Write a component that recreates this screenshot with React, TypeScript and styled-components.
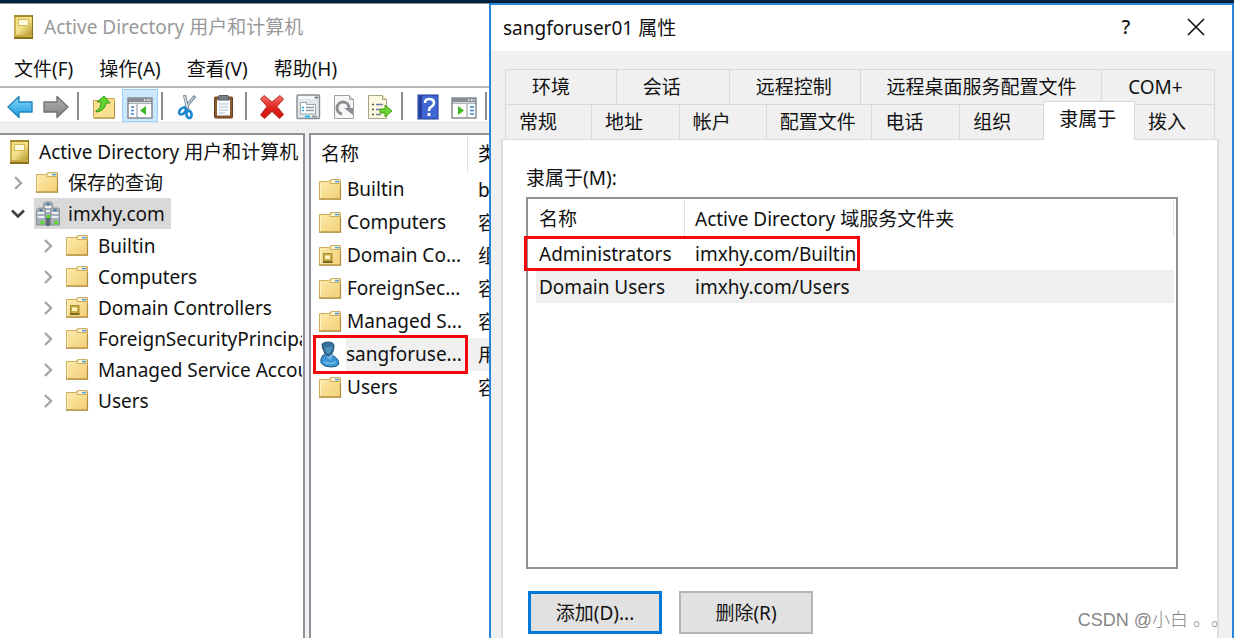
import React from "react";
import styled, { createGlobalStyle } from "styled-components";

const GlobalStyle = createGlobalStyle`
  *, *::before, *::after { box-sizing: border-box; }
  body {
    margin: 0;
    background: #fff;
    color: #111;
    font: 19px/24px "Noto Sans", "Noto Sans CJK SC", sans-serif;
  }
  button, input { font: inherit; color: inherit; }
  ul { list-style: none; margin: 0; padding: 0; }
  svg { display: block; flex: none; }
`;

const Desktop = styled.main`
  position: relative;
  display: flex;
  min-height: 100vh;
  padding-top: 3px;
  background: #03203c;
  overflow: hidden;
`;

const Console = styled.section`
  flex: 0 0 489px;
  display: flex;
  flex-direction: column;
  background: #f0f0f0;
  border-top: 1px solid #8b9197;
  overflow: hidden;
`;

const ConsoleTitle = styled.header`
  display: flex;
  align-items: center;
  gap: 10px;
  height: 46px;
  padding-left: 13px;
  background: #fff;
  color: #999;
  white-space: nowrap;
`;

const Heading = styled.h1`
  margin: 0;
  font: inherit;
`;

const MenuBar = styled.nav`
  display: flex;
  gap: 26px;
  height: 38px;
  padding: 2px 14px 0;
  background: #fff;
  border-bottom: 2px solid #b9b9b9;
`;

const MenuButton = styled.button`
  padding: 0;
  border: 0;
  background: none;
  white-space: nowrap;
`;

const ToolBar = styled.div`
  display: flex;
  align-items: center;
  height: 35px;
  padding: 1px 0 0 2px;
  background: #fff;
  border-bottom: 1px solid #e3e3e3;
`;

const ToolButton = styled.button<{ $on?: boolean }>`
  display: flex;
  flex: none;
  align-items: center;
  justify-content: center;
  width: 36px;
  height: 33px;
  padding: 2px 0 0;
  border: 1px solid ${(p) => (p.$on ? "#99d1ff" : "transparent")};
  background: ${(p) => (p.$on ? "#cce8ff" : "none")};
`;

const ToolDivider = styled.span`
  flex: none;
  width: 2px;
  height: 28px;
  margin: 0 7px 0 3px;
  background: #8d8d8d;
`;

const Panes = styled.div`
  flex: 1;
  display: flex;
  gap: 4px;
  padding-top: 10px;
`;

const TreePane = styled.nav`
  flex: 0 0 305px;
  min-width: 0;
  padding: 1px 1px 0 0;
  background: #fff;
  border: solid #8d9299;
  border-width: 2px 2px 0 0;
`;

const TreeClip = styled.div`
  overflow: hidden;
`;

const TreeRow = styled.div<{ $level: number }>`
  display: flex;
  align-items: center;
  height: 31px;
  padding-left: ${(p) => [8, 0, 30][p.$level]}px;
  white-space: nowrap;
`;

const Branch = styled.ul`
  padding-top: 1px;
`;

const Twisty = styled.button`
  display: flex;
  flex: none;
  align-items: center;
  justify-content: center;
  width: 34px;
  height: 31px;
  padding: 0;
  border: 0;
  background: none;
`;

const TreeLabel = styled.a<{ $selected?: boolean; $gap?: number }>`
  display: flex;
  align-items: center;
  gap: ${(p) => p.$gap ?? 9}px;
  height: 31px;
  padding: 0 6px 0 1px;
  background: ${(p) => (p.$selected ? "#d9d9d9" : "none")};
  color: inherit;
  text-decoration: none;
`;

const ListPane = styled.div`
  flex: 1;
  min-width: 0;
  background: #fff;
  border: solid #8d9299;
  border-width: 2px 0 0 2px;
  overflow: hidden;
`;

const ObjectTable = styled.table`
  width: 260px;
  table-layout: fixed;
  border-collapse: collapse;
  th, td {
    height: 33px;
    padding: 0 0 0 10px;
    text-align: left;
    font-weight: 400;
    white-space: nowrap;
  }
  th { height: 38px; }
  th:first-child { width: 157px; box-shadow: inset -1px 0 #e2e2e2; }
  td:first-child { padding-left: 7px; }
`;

const ObjectName = styled.span`
  position: relative;
  display: flex;
  align-items: center;
  gap: 5px;
  height: 33px;
`;

const NameText = styled.span<{ $shaded?: boolean }>`
  flex: 1;
  line-height: 33px;
  background: ${(p) => (p.$shaded ? "#f0f0f0" : "none")};
`;

const TypeCell = styled.td<{ $shaded?: boolean }>`
  background: ${(p) => (p.$shaded ? "#f0f0f0" : "none")};
`;

const ObjectMark = styled.span`
  position: absolute;
  inset: -3px 0 -3px -5px;
  border: 3px solid #f5060b;
`;

const Dialog = styled.section`
  flex: 1;
  min-width: 0;
  display: flex;
  flex-direction: column;
  background: #f0f0f0;
  border: solid #2b86d9;
  border-width: 2px 2px 0;
`;

const DialogTitle = styled.header`
  display: flex;
  align-items: center;
  height: 46px;
  padding: 0 23px 0 12px;
  background: #fff;
`;

const DialogHeading = styled.h2`
  flex: 1;
  margin: 0;
  font: inherit;
`;

const CaptionButton = styled.button`
  display: flex;
  align-items: center;
  justify-content: center;
  width: 26px;
  height: 30px;
  margin-left: 44px;
  padding: 0 0 2px;
  border: 0;
  background: none;
  font-weight: 500;
`;

const TabRows = styled.div`
  padding: 18px 17px 0 14px;
`;

const TabRow = styled.div<{ $columns: string }>`
  display: grid;
  grid-template-columns: ${(p) => p.$columns};
  height: 35px;
  border-left: 1px solid #d9d9d9;
`;

const Tab = styled.button<{ $indent: number; $active?: boolean }>`
  position: relative;
  padding: 0 0 ${(p) => (p.$active ? 4 : 0)}px ${(p) => p.$indent}px;
  border: solid #d9d9d9;
  border-width: 1px 1px 0 ${(p) => (p.$active ? 1 : 0)}px;
  background: ${(p) => (p.$active ? "#fff" : "none")};
  margin: ${(p) => (p.$active ? "-3px 0 -1px -1px" : "0")};
  text-align: left;
  white-space: nowrap;
`;

const TabPanel = styled.div`
  flex: 1;
  display: flex;
  flex-direction: column;
  margin: 0 13px 0 10px;
  padding: 26px 39px 4px 23px;
  background: #fff;
  border: solid #dcdcdc;
  border-width: 1px 2px 0;
`;

const PanelLabel = styled.h3`
  margin: 0 0 7px;
  font: inherit;
`;

const MemberFrame = styled.div`
  flex: 1;
  min-height: 160px;
  padding: 1px 2px 0 8px;
  border: 2px solid #8d9299;
`;

const MemberTable = styled.table`
  width: 100%;
  table-layout: fixed;
  border-collapse: collapse;
  th, td {
    height: 33px;
    padding: 0 0 0 10px;
    text-align: left;
    font-weight: 400;
    white-space: nowrap;
  }
  th { height: 37px; box-shadow: inset -1px 0 #e2e2e2; }
  th:first-child { width: 149px; }
  th:first-child, td:first-child { padding-left: 3px; }
`;

const MemberRow = styled.tr<{ $shaded?: boolean }>`
  position: relative;
  background: ${(p) => (p.$shaded ? "#efefef" : "none")};
`;

const MemberMark = styled.span`
  position: absolute;
  z-index: 1;
  left: -12px;
  top: -1px;
  width: 336px;
  height: 35px;
  border: 3px solid #f5060b;
`;

const Actions = styled.div`
  display: flex;
  gap: 17px;
  margin-top: 22px;
  padding-left: 2px;
`;

const ActionButton = styled.button<{ $primary?: boolean }>`
  width: 134px;
  height: 43px;
  padding: 0;
  border: ${(p) => (p.$primary ? "3px solid #0078d7" : "2px solid #b5b5b5")};
  background: #e1e1e1;
`;

const Watermark = styled.div`
  position: absolute;
  right: 5px;
  bottom: 6px;
  color: #868686;
  font: 18px/24px "Liberation Sans", "Noto Sans CJK SC", sans-serif;
  font-weight: 300;
  text-spacing-trim: space-all;
  white-space: nowrap;
`;

function BookIcon() {
  return (
    <svg width="21" height="26" viewBox="0 0 21 26" aria-hidden="true">
      <defs>
        <linearGradient id="book" x1="0" x2="1" y1="0" y2="1">
          <stop offset="0" stopColor="#efdc7c" />
          <stop offset="0.5" stopColor="#f3e28a" />
          <stop offset="1" stopColor="#b9962c" />
        </linearGradient>
      </defs>
      <rect x="1" y="1" width="19" height="24" fill="#8a6f1c" />
      <rect x="1" y="3" width="18" height="18" fill="url(#book)" />
      <path d="M1 1h18v2H1z" fill="#a98a2c" />
      <path d="M1 21h18v2H1z" fill="#c9ac48" />
      <path d="M1 3h2v18H1z" fill="#cdb14e" />
      <rect x="5.500" y="5.500" width="10" height="6" fill="#fffbe2" stroke="#d4bb58" />
    </svg>
  );
}

function FolderIcon({ badge }: { badge?: boolean }) {
  return (
    <svg width="24" height="24" viewBox="0 0 24 24" aria-hidden="true">
      <defs>
        <linearGradient id="folder" x1="0" x2="1" y1="0" y2="1">
          <stop offset="0" stopColor="#fdebae" />
          <stop offset="1" stopColor="#f2cf75" />
        </linearGradient>
      </defs>
      <path d="M1.500 3.500h9l2-1.500h10v19h-21z" fill="url(#folder)" stroke="#d1ad5c" />
      <path d="M11.500 5l2-3.500h8.500v4h-10z" fill="#fff4cc" stroke="#c19c4b" strokeWidth="0.800" />
      <path d="M17 2.800h4v1.600h-4z" fill="#4c9fd8" />
      <path d="M2.500 5v15" stroke="#fff3c4" />
      <path d="M1 21.200h21.500V7" fill="none" stroke="#b28d42" strokeWidth="1.200" />
      {badge && (
        <g>
          <rect x="5.500" y="9.500" width="8.500" height="9" fill="#c9ad4a" stroke="#a78c35" />
          <rect x="7" y="11.500" width="5" height="3.500" fill="#fff4bd" />
          <path d="M5 18h9.500" stroke="#6e5917" strokeWidth="1.500" />
        </g>
      )}
    </svg>
  );
}

function DomainIcon() {
  const tower = (x: number, y: number, lampX: number) => (
    <g transform={`translate(${x} ${y})`}>
      <path d="M0 2l2-2h6l1 2v15H0z" fill="#a6afb8" stroke="#7b858f" strokeWidth="0.800" />
      <path d="M1 4h7v2H1zM1 8h7v2H1z" fill="#e9eef1" />
      <path d="M3 1.500h3v1.500H3z" fill="#246f92" />
      <path d={`M${lampX} 13h3.500v3.500h-3.500z`} fill="#57dc28" />
    </g>
  );
  return (
    <svg width="26" height="26" viewBox="0 0 26 26" aria-hidden="true">
      {tower(8.5, 1, 3)}
      {tower(1.5, 7, 4)}
      {tower(15.5, 7, 4)}
      <path d="M11 17h4v8h-4z" fill="#5e6a74" />
    </svg>
  );
}

function UserIcon() {
  return (
    <svg width="23" height="27" viewBox="0 0 23 27" aria-hidden="true">
      <path d="M5 14q-3 4-2 8 3 4 10 4 6 0 8-3 0-5-5-8z" fill="#3c96d4" stroke="#155a8b" />
      <path d="M7 14l5 5 3-4v-3H8z" fill="#75b9e6" />
      <path d="M4 3q2-2 6-2 6 0 6 4 0 8-6 10-4-1-4-5-2-2-2-7z" fill="#37729c" stroke="#1b5078" />
      <path d="M7 6q4 1 7-1 0 6-4 8-3-2-3-7z" fill="#4e93bd" />
      <path d="M6 21q6 3 12 0" fill="none" stroke="#6fbce9" strokeWidth="1.400" />
    </svg>
  );
}

function Chevron({ open }: { open?: boolean }) {
  return (
    <svg width="16" height="16" viewBox="0 0 16 16" fill="none" aria-hidden="true">
      {open ? (
        <path d="M3 4.500l6 6 6-6" stroke="#404040" strokeWidth="2.600" />
      ) : (
        <path d="M6 2l6 6-6 6" stroke="#a6a6a6" strokeWidth="2.400" />
      )}
    </svg>
  );
}

function ArrowIcon({ forward }: { forward?: boolean }) {
  const id = forward ? "arrowForward" : "arrowBack";
  return (
    <svg width="26" height="26" viewBox="0 0 26 26" aria-hidden="true">
      <defs>
        <linearGradient id={id} x1="0" x2="0" y1="0" y2="1">
          <stop offset="0" stopColor={forward ? "#b5b5b5" : "#8fdcfb"} />
          <stop offset="1" stopColor={forward ? "#808080" : "#1494e0"} />
        </linearGradient>
      </defs>
      <path
        d={forward ? "M25 13L14 2.500V8H1v10h13v5.500z" : "M1 13L12 2.500V8h13v10H12v5.500z"}
        fill={`url(#${id})`}
        stroke={forward ? "#737373" : "#2284bd"}
        strokeWidth="1.400"
        strokeLinejoin="round"
      />
    </svg>
  );
}

function UpFolderIcon() {
  return (
    <svg width="24" height="26" viewBox="0 0 24 26" aria-hidden="true">
      <path d="M1.500 6.500h10l2-2h9v19.500h-21z" fill="#f9df90" stroke="#c9a551" />
      <path d="M2 24h20.500V9" fill="none" stroke="#b08d45" />
      <path d="M4 17q5-2 5-9H5l7-6 6 7h-4q-1 8-10 9z" fill="#5fd52d" stroke="#37981a" />
    </svg>
  );
}

function WindowIcon({ action }: { action?: boolean }) {
  return (
    <svg width="26" height="24" viewBox="0 0 26 24" aria-hidden="true">
      <rect x="1" y="3" width="24" height="20" fill="#fff" stroke="#7f858c" strokeWidth="1.400" />
      <path d="M1 3h24v6H1z" fill="#868d95" />
      <path d="M2 7h22v1.500H2z" fill="#d8dce0" />
      <path d="M17 5h1.500M20 5h1.500M22.500 5h1" stroke="#fff" strokeWidth="1.500" />
      <path d={action ? "M16 9v14" : "M10 9v14"} stroke="#8c9299" />
      {action ? (
        <g>
          <path d="M7 11v9l6-4.500z" fill="#3cb823" />
          <path d="M19 12h4M19 15.500h4M19 19h4" stroke="#3d84c4" strokeWidth="1.600" />
        </g>
      ) : (
        <g>
          <path d="M19 11v9l-6-4.500z" fill="#3cb823" />
          <path d="M4 12h3M4 15.500h3M4 19h3" stroke="#3d84c4" strokeWidth="1.600" />
        </g>
      )}
    </svg>
  );
}

function ScissorsIcon() {
  return (
    <svg width="22" height="26" viewBox="0 0 22 26" fill="none" aria-hidden="true">
      <path d="M7.500 1l3.500 15M18 2L8 14" stroke="#768898" strokeWidth="3.200" />
      <path d="M7.500 2l3 12M17 3L9 13" stroke="#dbe5eb" strokeWidth="1.200" />
      <ellipse cx="5.500" cy="17" rx="2.600" ry="4" transform="rotate(45 5.500 17)" stroke="#1686cf" strokeWidth="2.600" />
      <ellipse cx="12" cy="20.500" rx="2.600" ry="3.600" transform="rotate(-10 12 20.500)" stroke="#1686cf" strokeWidth="2.600" />
    </svg>
  );
}

function ClipboardIcon() {
  return (
    <svg width="22" height="26" viewBox="0 0 22 26" aria-hidden="true">
      <rect x="1.500" y="3" width="18" height="21" rx="1" fill="#8a592d" stroke="#66401e" />
      <path d="M4 6h13v15.500H4z" fill="#f8fbff" />
      <path d="M6 3V1.500h9V3l1 3H5z" fill="#777f86" stroke="#575d63" />
      <path d="M6 10h9M6 13h9M6 16h9M6 19h6" stroke="#b1bdca" strokeWidth="1.200" />
    </svg>
  );
}

function DeleteIcon() {
  return (
    <svg width="26" height="26" viewBox="0 0 26 26" aria-hidden="true">
      <defs>
        <linearGradient id="delete" x1="0" x2="0" y1="0" y2="1">
          <stop offset="0" stopColor="#f27a72" />
          <stop offset="0.500" stopColor="#e22722" />
          <stop offset="1" stopColor="#c91312" />
        </linearGradient>
      </defs>
      <path
        d="M5 1.500L1.500 5 8 12.500 1.500 21 5.500 24.500 13 17.500 20.500 24.500 24.500 20.500 18 12.500 24.500 5 21 1.500 13 8z"
        fill="url(#delete)"
        stroke="#bd2420"
        strokeLinejoin="round"
      />
    </svg>
  );
}

function PropertiesIcon() {
  return (
    <svg width="25" height="26" viewBox="0 0 25 26" aria-hidden="true">
      <rect x="1" y="1" width="22.500" height="23.500" rx="1" fill="#e4e7ea" stroke="#888e94" strokeWidth="1.400" />
      <path d="M3 3.500h15" stroke="#fff" strokeWidth="2" />
      <path d="M19 3.500h3" stroke="#666" strokeWidth="1.500" />
      <path d="M4.500 8.500h6v2h9V20h-15z" fill="#fff" stroke="#9ba2a8" />
      <path d="M6 13.500h2M6 16.500h2" stroke="#26a4dc" strokeWidth="1.600" />
      <path d="M10 13.500h8M10 16.500h8" stroke="#8e979e" strokeWidth="1.400" />
      <path d="M9 22.500h5" stroke="#1fc0ee" strokeWidth="2" />
      <path d="M16 22.500h5" stroke="#969ca1" strokeWidth="2" />
    </svg>
  );
}

function RefreshIcon() {
  return (
    <svg width="22" height="26" viewBox="0 0 22 26" aria-hidden="true">
      <path d="M1.500 1.500h15l4 4v19h-19z" fill="#f6f6f6" stroke="#a1a1a1" />
      <path d="M16.500 1.500v4h4" fill="#ddd" stroke="#a1a1a1" />
      <path d="M9 20a6 6 0 1 1 7-6" fill="none" stroke="#898d91" strokeWidth="3" />
      <path d="M11 14h9v7z" fill="#898d91" />
    </svg>
  );
}

function ExportIcon() {
  return (
    <svg width="26" height="26" viewBox="0 0 26 26" aria-hidden="true">
      <path d="M1.500 1.500h14l4 4v19h-18z" fill="#fdfae0" stroke="#a8a28b" />
      <path d="M15.500 1.500v4h4" fill="#eee7b8" stroke="#a8a28b" />
      <path d="M5 10.500h2M5 15.500h2M5 20.500h2" stroke="#555" strokeWidth="1.600" />
      <path d="M9 10.500h7M9 15.500h4M9 20.500h5" stroke="#7679a5" strokeWidth="1.500" />
      <path d="M13 15h5v-4l7 6-7 6v-4h-5z" fill="#6bd633" stroke="#47a21d" />
    </svg>
  );
}

function HelpIcon() {
  return (
    <svg width="22" height="26" viewBox="0 0 22 26" aria-hidden="true">
      <rect x="1" y="1" width="20" height="24" fill="#3f66d2" stroke="#203b91" />
      <path d="M2 2h3v22H2z" fill="#263f9b" />
      <path d="M8 9q0-4 4-4 5 0 5 4 0 2-3 4-2 1-2 4" fill="none" stroke="#fff" strokeWidth="2.600" />
      <rect x="10.500" y="19" width="3" height="3" fill="#fff" />
    </svg>
  );
}

const containers = [
  { name: "Builtin" },
  { name: "Computers" },
  { name: "Domain Controllers", badge: true },
  { name: "ForeignSecurityPrincipals" },
  { name: "Managed Service Accounts" },
  { name: "Users" },
];

const objects = [
  { name: "Builtin", type: "builtin" },
  { name: "Computers", type: "容器" },
  { name: "Domain Co...", type: "组织", badge: true },
  { name: "ForeignSec...", type: "容器" },
  { name: "Managed S...", type: "容器" },
  { name: "sangforuse...", type: "用户", user: true },
  { name: "Users", type: "容器" },
];

const upperTabs = ["环境", "会话", "远程控制", "远程桌面服务配置文件", "COM+"];
const lowerTabs = ["常规", "地址", "帐户", "配置文件", "电话", "组织", "隶属于", "拨入"];

export default function App() {
  return (
    <>
      <GlobalStyle />
      <Desktop>
        <Console>
          <ConsoleTitle>
            <BookIcon />
            <Heading>Active Directory 用户和计算机</Heading>
          </ConsoleTitle>
          <MenuBar>
            {["文件(F)", "操作(A)", "查看(V)", "帮助(H)"].map((m) => (
              <MenuButton key={m}>{m}</MenuButton>
            ))}
          </MenuBar>
          <ToolBar role="toolbar">
            <ToolButton aria-label="后退"><ArrowIcon /></ToolButton>
            <ToolButton aria-label="前进"><ArrowIcon forward /></ToolButton>
            <ToolDivider />
            <ToolButton aria-label="向上"><UpFolderIcon /></ToolButton>
            <ToolButton aria-label="控制台树" aria-pressed="true" $on><WindowIcon /></ToolButton>
            <ToolDivider />
            <ToolButton aria-label="剪切"><ScissorsIcon /></ToolButton>
            <ToolButton aria-label="粘贴"><ClipboardIcon /></ToolButton>
            <ToolDivider />
            <ToolButton aria-label="删除"><DeleteIcon /></ToolButton>
            <ToolButton aria-label="属性"><PropertiesIcon /></ToolButton>
            <ToolButton aria-label="刷新"><RefreshIcon /></ToolButton>
            <ToolButton aria-label="导出列表"><ExportIcon /></ToolButton>
            <ToolDivider />
            <ToolButton aria-label="帮助"><HelpIcon /></ToolButton>
            <ToolButton aria-label="操作窗格"><WindowIcon action /></ToolButton>
            <ToolDivider />
          </ToolBar>
          <Panes>
            <TreePane>
              <TreeClip>
                <TreeRow $level={0}>
                  <TreeLabel href="#root">
                    <BookIcon />
                    Active Directory 用户和计算机
                  </TreeLabel>
                </TreeRow>
                <ul>
                  <li>
                    <TreeRow $level={1}>
                      <Twisty aria-label="展开"><Chevron /></Twisty>
                      <TreeLabel href="#queries"><FolderIcon />保存的查询</TreeLabel>
                    </TreeRow>
                  </li>
                  <li>
                    <TreeRow $level={1}>
                      <Twisty aria-label="折叠"><Chevron open /></Twisty>
                      <TreeLabel href="#domain" $selected $gap={7}><DomainIcon />imxhy.com</TreeLabel>
                    </TreeRow>
                    <Branch>
                      {containers.map((c) => (
                        <li key={c.name}>
                          <TreeRow $level={2}>
                            <Twisty aria-label="展开"><Chevron /></Twisty>
                            <TreeLabel href="#container"><FolderIcon badge={c.badge} />{c.name}</TreeLabel>
                          </TreeRow>
                        </li>
                      ))}
                    </Branch>
                  </li>
                </ul>
              </TreeClip>
            </TreePane>
            <ListPane>
              <ObjectTable>
                <thead>
                  <tr><th>名称</th><th>类型</th></tr>
                </thead>
                <tbody>
                  {objects.map((o) => (
                    <tr key={o.name}>
                      <td>
                        <ObjectName>
                          {o.user ? <UserIcon /> : <FolderIcon badge={o.badge} />}
                          <NameText $shaded={o.user}>{o.name}</NameText>
                          {o.user && <ObjectMark />}
                        </ObjectName>
                      </td>
                      <TypeCell $shaded={o.user}>{o.type}</TypeCell>
                    </tr>
                  ))}
                </tbody>
              </ObjectTable>
            </ListPane>
          </Panes>
        </Console>

        <Dialog role="dialog" aria-labelledby="dialog-title">
          <DialogTitle>
            <DialogHeading id="dialog-title">sangforuser01 属性</DialogHeading>
            <CaptionButton>?</CaptionButton>
            <CaptionButton aria-label="关闭">
              <svg width="18" height="18" viewBox="0 0 18 18" aria-hidden="true">
                <path d="M1 1l16 16M17 1L1 17" stroke="#111" strokeWidth="1.600" />
              </svg>
            </CaptionButton>
          </DialogTitle>
          <TabRows role="tablist">
            <TabRow $columns="111fr 113fr 131fr 242fr 113fr">
              {upperTabs.map((t) => (
                <Tab key={t} role="tab" $indent={26}>{t}</Tab>
              ))}
            </TabRow>
            <TabRow $columns="86fr 88fr 87fr 106fr 88fr 84fr 91fr 80fr">
              {lowerTabs.map((t) => (
                <Tab
                  key={t}
                  role="tab"
                  $indent={t === "隶属于" ? 15 : 13}
                  $active={t === "隶属于"}
                  aria-selected={t === "隶属于"}
                >
                  {t}
                </Tab>
              ))}
            </TabRow>
          </TabRows>
          <TabPanel role="tabpanel">
            <PanelLabel>隶属于(M):</PanelLabel>
            <MemberFrame>
              <MemberTable>
                <thead>
                  <tr><th>名称</th><th>Active Directory 域服务文件夹</th></tr>
                </thead>
                <tbody>
                  <MemberRow>
                    <td>Administrators<MemberMark /></td>
                    <td>imxhy.com/Builtin</td>
                  </MemberRow>
                  <MemberRow $shaded>
                    <td>Domain Users</td>
                    <td>imxhy.com/Users</td>
                  </MemberRow>
                </tbody>
              </MemberTable>
            </MemberFrame>
            <Actions>
              <ActionButton $primary>添加(D)...</ActionButton>
              <ActionButton>删除(R)</ActionButton>
            </Actions>
          </TabPanel>
        </Dialog>
        <Watermark>CSDN @小白 。。</Watermark>
      </Desktop>
    </>
  );
}
